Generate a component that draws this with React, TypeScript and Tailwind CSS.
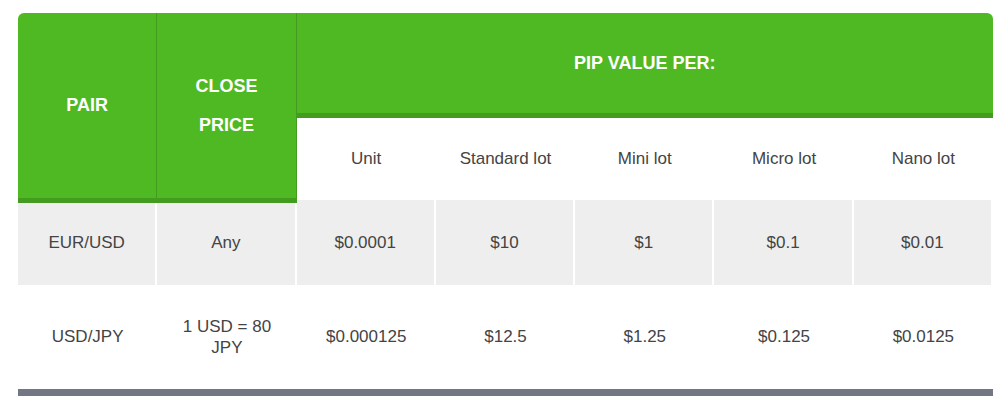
import React from "react";

type Row = {
  pair: string;
  close: React.ReactNode;
  values: string[];
};

const lots = ["Unit", "Standard lot", "Mini lot", "Micro lot", "Nano lot"];

const rows: Row[] = [
  {
    pair: "EUR/USD",
    close: "Any",
    values: ["$0.0001", "$10", "$1", "$0.1", "$0.01"],
  },
  {
    pair: "USD/JPY",
    close: (
      <>
        1 USD = 80
        <br />
        JPY
      </>
    ),
    values: ["$0.000125", "$12.5", "$1.25", "$0.125", "$0.0125"],
  },
];

const App: React.FC = () => {
  return (
    <div
      className="w-[1001px] h-[411px] bg-white pt-[13px] pl-[18px]"
      style={{ fontFamily: '"Liberation Sans", Arial, sans-serif' }}
    >
      <div className="w-[975px] grid grid-cols-7 rounded-t-[6px] overflow-hidden text-[17px] text-[#444]">
        {/* header */}
        <div className="row-span-2 relative z-10 -mb-[3px] bg-[#4fb923] border-r border-b-[5px] border-[#439b20] flex items-center justify-center text-white font-bold text-[18px]">
          PAIR
        </div>
        <div className="row-span-2 relative z-10 -mb-[3px] bg-[#4fb923] border-r border-b-[5px] border-[#439b20] flex items-center justify-center text-center text-white font-bold text-[18px] leading-[39px]">
          CLOSE
          <br />
          PRICE
        </div>
        <div className="col-span-5 h-[105px] bg-[#4fb923] border-b-[5px] border-[#439b20] flex items-center justify-center text-white font-bold text-[18px]">
          PIP VALUE PER:
        </div>
        {lots.map((l) => (
          <div key={l} className="h-[82px] flex items-center justify-center">
            {l}
          </div>
        ))}

        {/* body */}
        {rows.map((r, i) => {
          const cell =
            i === 0
              ? "h-[85px] bg-[#eeeeee] border-r-2 border-white last:border-r-0"
              : "h-[104px] bg-white";
          return (
            <React.Fragment key={r.pair}>
              <div className={`${cell} flex items-center justify-center`}>
                {r.pair}
              </div>
              <div
                className={`${cell} flex items-center justify-center text-center leading-[21px]`}
              >
                {r.close}
              </div>
              {r.values.map((v, j) => (
                <div
                  key={j}
                  className={`${cell} ${
                    j === 4 ? "border-r-0" : ""
                  } flex items-center justify-center`}
                >
                  {v}
                </div>
              ))}
            </React.Fragment>
          );
        })}
        <div className="col-span-7 h-[7px] bg-[#737784]" />
      </div>
    </div>
  );
};

export default App;
